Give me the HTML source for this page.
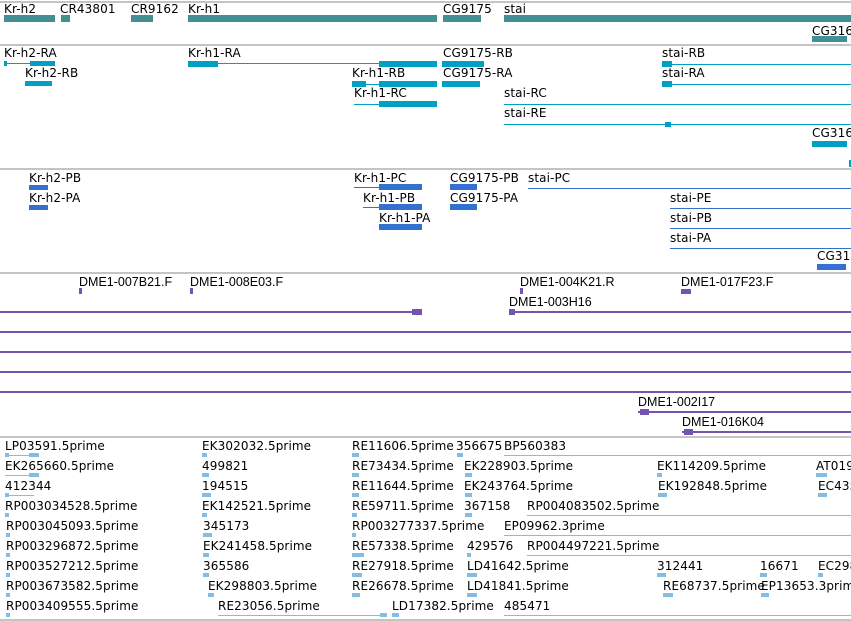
<!DOCTYPE html>
<html><head><meta charset="utf-8"><style>
body{margin:0;width:851px;height:621px;background:#fff;position:relative;overflow:hidden;font-family:"DejaVu Sans","Liberation Sans",sans-serif}
.t{position:absolute;font-size:12px;line-height:13px;letter-spacing:0.1px;white-space:nowrap;color:#000;margin-top:1px}
.d{position:absolute;font-size:12.5px;line-height:12px;white-space:nowrap;font-family:"Liberation Sans",sans-serif;margin-top:0px}
.s{position:absolute;left:0;width:851px;height:2px;background:#c4c4c4}
.g{position:absolute;background:#438f94;height:7px}
.r{position:absolute;background:#00a0c4}
.p{position:absolute;background:#3370d0}
.m{position:absolute;background:#7355b0}
.e{position:absolute;background:#85bde2}
</style></head><body>
<div class="s" style="top:1px"></div>
<div class="s" style="top:44px"></div>
<div class="s" style="top:168px"></div>
<div class="s" style="top:272px"></div>
<div class="s" style="top:436px"></div>
<div class="s" style="top:619px"></div>

<div class="t" style="left:4px;top:2px">Kr-h2</div>
<div class="t" style="left:60px;top:2px">CR43801</div>
<div class="t" style="left:131px;top:2px">CR9162</div>
<div class="t" style="left:188px;top:2px">Kr-h1</div>
<div class="t" style="left:443px;top:2px">CG9175</div>
<div class="t" style="left:504px;top:2px">stai</div>
<div class="g" style="left:4px;top:15px;width:51px"></div>
<div class="g" style="left:61px;top:15px;width:9px"></div>
<div class="g" style="left:131px;top:15px;width:22px"></div>
<div class="g" style="left:188px;top:15px;width:249px"></div>
<div class="g" style="left:443px;top:15px;width:38px"></div>
<div class="g" style="left:504px;top:15px;width:347px"></div>
<div class="t" style="left:812px;top:24px">CG316</div>
<div class="g" style="left:812px;top:36px;width:35px;height:6px"></div>

<div class="t" style="left:4px;top:46px">Kr-h2-RA</div>
<div class="r" style="left:4px;top:63px;width:51px;height:1px"></div>
<div class="r" style="left:30px;top:61px;width:25px;height:5px"></div>
<div class="r" style="left:4px;top:61px;width:3px;height:5px"></div>
<div class="t" style="left:25px;top:66px">Kr-h2-RB</div>
<div class="r" style="left:25px;top:81px;width:27px;height:5px"></div>
<div class="t" style="left:188px;top:46px">Kr-h1-RA</div>
<div class="r" style="left:188px;top:63px;width:249px;height:1px"></div>
<div class="r" style="left:188px;top:61px;width:30px;height:6px"></div>
<div class="r" style="left:379px;top:61px;width:58px;height:6px"></div>
<div class="t" style="left:352px;top:66px">Kr-h1-RB</div>
<div class="r" style="left:352px;top:84px;width:85px;height:1px"></div>
<div class="r" style="left:352px;top:81px;width:14px;height:6px"></div>
<div class="r" style="left:379px;top:81px;width:58px;height:6px"></div>
<div class="t" style="left:354px;top:86px">Kr-h1-RC</div>
<div class="r" style="left:354px;top:104px;width:83px;height:1px"></div>
<div class="r" style="left:379px;top:101px;width:58px;height:6px"></div>
<div class="t" style="left:443px;top:46px">CG9175-RB</div>
<div class="r" style="left:442px;top:61px;width:42px;height:6px"></div>
<div class="t" style="left:443px;top:66px">CG9175-RA</div>
<div class="r" style="left:442px;top:81px;width:38px;height:6px"></div>
<div class="t" style="left:662px;top:46px">stai-RB</div>
<div class="r" style="left:662px;top:64px;width:189px;height:1px"></div>
<div class="r" style="left:662px;top:61px;width:10px;height:6px"></div>
<div class="t" style="left:662px;top:66px">stai-RA</div>
<div class="r" style="left:662px;top:84px;width:189px;height:1px"></div>
<div class="r" style="left:662px;top:81px;width:10px;height:6px"></div>
<div class="t" style="left:504px;top:86px">stai-RC</div>
<div class="r" style="left:504px;top:104px;width:347px;height:1px"></div>
<div class="t" style="left:504px;top:106px">stai-RE</div>
<div class="r" style="left:504px;top:124px;width:347px;height:1px"></div>
<div class="r" style="left:665px;top:122px;width:6px;height:5px"></div>
<div class="t" style="left:812px;top:126px">CG316</div>
<div class="r" style="left:812px;top:141px;width:35px;height:6px"></div>
<div class="r" style="left:849px;top:160px;width:2px;height:7px"></div>

<div class="t" style="left:29px;top:171px">Kr-h2-PB</div>
<div class="p" style="left:29px;top:185px;width:19px;height:5px"></div>
<div class="t" style="left:29px;top:191px">Kr-h2-PA</div>
<div class="p" style="left:29px;top:205px;width:19px;height:5px"></div>
<div class="t" style="left:354px;top:171px">Kr-h1-PC</div>
<div class="p" style="left:354px;top:187px;width:68px;height:1px"></div>
<div class="p" style="left:379px;top:184px;width:43px;height:6px"></div>
<div class="t" style="left:363px;top:191px">Kr-h1-PB</div>
<div class="p" style="left:363px;top:207px;width:59px;height:1px"></div>
<div class="p" style="left:379px;top:204px;width:43px;height:6px"></div>
<div class="t" style="left:379px;top:211px">Kr-h1-PA</div>
<div class="p" style="left:379px;top:224px;width:43px;height:6px"></div>
<div class="t" style="left:450px;top:171px">CG9175-PB</div>
<div class="p" style="left:450px;top:184px;width:27px;height:6px"></div>
<div class="t" style="left:450px;top:191px">CG9175-PA</div>
<div class="p" style="left:450px;top:204px;width:27px;height:6px"></div>
<div class="t" style="left:528px;top:171px">stai-PC</div>
<div class="p" style="left:528px;top:188px;width:323px;height:1px"></div>
<div class="t" style="left:670px;top:191px">stai-PE</div>
<div class="p" style="left:670px;top:208px;width:181px;height:1px"></div>
<div class="t" style="left:670px;top:211px">stai-PB</div>
<div class="p" style="left:670px;top:228px;width:181px;height:1px"></div>
<div class="t" style="left:670px;top:231px">stai-PA</div>
<div class="p" style="left:670px;top:248px;width:181px;height:1px"></div>
<div class="t" style="left:817px;top:249px">CG31</div>
<div class="p" style="left:817px;top:264px;width:29px;height:6px"></div>

<div class="d" style="left:79px;top:276px">DME1-007B21.F</div>
<div class="d" style="left:190px;top:276px">DME1-008E03.F</div>
<div class="d" style="left:520px;top:276px">DME1-004K21.R</div>
<div class="d" style="left:681px;top:276px">DME1-017F23.F</div>
<div class="m" style="left:79px;top:288px;width:3px;height:6px"></div>
<div class="m" style="left:190px;top:288px;width:3px;height:6px"></div>
<div class="m" style="left:520px;top:288px;width:3px;height:6px"></div>
<div class="m" style="left:681px;top:289px;width:10px;height:5px"></div>
<div class="d" style="left:509px;top:296px">DME1-003H16</div>
<div class="m" style="left:0;top:311px;width:422px;height:2px"></div>
<div class="m" style="left:412px;top:309px;width:10px;height:6px"></div>
<div class="m" style="left:509px;top:311px;width:342px;height:2px"></div>
<div class="m" style="left:509px;top:309px;width:6px;height:6px"></div>
<div class="m" style="left:0;top:331px;width:851px;height:2px"></div>
<div class="m" style="left:0;top:351px;width:851px;height:2px"></div>
<div class="m" style="left:0;top:371px;width:851px;height:2px"></div>
<div class="m" style="left:0;top:391px;width:851px;height:2px"></div>
<div class="d" style="left:638px;top:396px">DME1-002I17</div>
<div class="m" style="left:638px;top:411px;width:213px;height:2px"></div>
<div class="m" style="left:640px;top:409px;width:9px;height:6px"></div>
<div class="d" style="left:682px;top:416px">DME1-016K04</div>
<div class="m" style="left:682px;top:431px;width:169px;height:2px"></div>
<div class="m" style="left:684px;top:429px;width:9px;height:6px"></div>

<div class="t" style="left:5px;top:439px">LP03591.5prime</div>
<div class="e" style="left:5px;top:455px;width:34px;height:1px"></div><div class="e" style="left:5px;top:453px;width:4px;height:4px"></div><div class="e" style="left:29px;top:453px;width:10px;height:4px"></div>
<div class="t" style="left:5px;top:459px">EK265660.5prime</div>
<div class="e" style="left:5px;top:475px;width:34px;height:1px"></div><div class="e" style="left:29px;top:473px;width:10px;height:4px"></div>
<div class="t" style="left:5px;top:479px">412344</div>
<div class="e" style="left:5px;top:495px;width:29px;height:1px"></div><div class="e" style="left:5px;top:493px;width:4px;height:4px"></div>
<div class="t" style="left:5px;top:499px">RP003034528.5prime</div><div class="e" style="left:5px;top:513px;width:4px;height:4px"></div>
<div class="t" style="left:6px;top:519px">RP003045093.5prime</div><div class="e" style="left:6px;top:533px;width:4px;height:4px"></div>
<div class="t" style="left:6px;top:539px">RP003296872.5prime</div><div class="e" style="left:6px;top:553px;width:4px;height:4px"></div>
<div class="t" style="left:6px;top:559px">RP003527212.5prime</div><div class="e" style="left:6px;top:573px;width:4px;height:4px"></div>
<div class="t" style="left:6px;top:579px">RP003673582.5prime</div><div class="e" style="left:6px;top:593px;width:4px;height:4px"></div>
<div class="t" style="left:6px;top:599px">RP003409555.5prime</div><div class="e" style="left:6px;top:613px;width:4px;height:4px"></div>
<div class="t" style="left:202px;top:439px">EK302032.5prime</div><div class="e" style="left:202px;top:453px;width:5px;height:4px"></div>
<div class="t" style="left:202px;top:459px">499821</div><div class="e" style="left:202px;top:473px;width:7px;height:4px"></div>
<div class="t" style="left:202px;top:479px">194515</div><div class="e" style="left:202px;top:493px;width:9px;height:4px"></div>
<div class="t" style="left:202px;top:499px">EK142521.5prime</div><div class="e" style="left:202px;top:513px;width:5px;height:4px"></div>
<div class="t" style="left:203px;top:519px">345173</div><div class="e" style="left:203px;top:533px;width:9px;height:4px"></div>
<div class="t" style="left:203px;top:539px">EK241458.5prime</div><div class="e" style="left:203px;top:553px;width:6px;height:4px"></div>
<div class="t" style="left:203px;top:559px">365586</div><div class="e" style="left:203px;top:573px;width:6px;height:4px"></div>
<div class="t" style="left:208px;top:579px">EK298803.5prime</div><div class="e" style="left:208px;top:593px;width:6px;height:4px"></div>
<div class="t" style="left:218px;top:599px">RE23056.5prime</div><div class="e" style="left:218px;top:615px;width:169px;height:1px"></div><div class="e" style="left:380px;top:613px;width:7px;height:4px"></div>
<div class="t" style="left:352px;top:439px">RE11606.5prime</div><div class="e" style="left:352px;top:453px;width:7px;height:4px"></div>
<div class="t" style="left:352px;top:459px">RE73434.5prime</div><div class="e" style="left:352px;top:473px;width:7px;height:4px"></div>
<div class="t" style="left:352px;top:479px">RE11644.5prime</div><div class="e" style="left:352px;top:493px;width:7px;height:4px"></div>
<div class="t" style="left:352px;top:499px">RE59711.5prime</div><div class="e" style="left:352px;top:513px;width:5px;height:4px"></div>
<div class="t" style="left:352px;top:519px">RP003277337.5prime</div><div class="e" style="left:352px;top:533px;width:4px;height:4px"></div>
<div class="t" style="left:352px;top:539px">RE57338.5prime</div><div class="e" style="left:352px;top:553px;width:12px;height:4px"></div>
<div class="t" style="left:352px;top:559px">RE27918.5prime</div><div class="e" style="left:352px;top:573px;width:10px;height:4px"></div>
<div class="t" style="left:352px;top:579px">RE26678.5prime</div><div class="e" style="left:352px;top:593px;width:8px;height:4px"></div>
<div class="t" style="left:392px;top:599px">LD17382.5prime</div><div class="e" style="left:392px;top:613px;width:7px;height:4px"></div>
<div class="t" style="left:456px;top:439px">356675</div><div class="e" style="left:457px;top:453px;width:6px;height:4px"></div>
<div class="t" style="left:504px;top:439px">BP560383</div><div class="e" style="left:504px;top:455px;width:347px;height:1px"></div>
<div class="t" style="left:464px;top:459px">EK228903.5prime</div><div class="e" style="left:465px;top:473px;width:7px;height:4px"></div>
<div class="t" style="left:464px;top:479px">EK243764.5prime</div><div class="e" style="left:465px;top:493px;width:7px;height:4px"></div>
<div class="t" style="left:464px;top:499px">367158</div><div class="e" style="left:465px;top:513px;width:7px;height:4px"></div>
<div class="t" style="left:527px;top:499px">RP004083502.5prime</div><div class="e" style="left:527px;top:515px;width:324px;height:1px"></div>
<div class="t" style="left:504px;top:519px">EP09962.3prime</div><div class="e" style="left:504px;top:535px;width:347px;height:1px"></div>
<div class="t" style="left:467px;top:539px">429576</div><div class="e" style="left:467px;top:553px;width:4px;height:4px"></div>
<div class="t" style="left:527px;top:539px">RP004497221.5prime</div><div class="e" style="left:527px;top:555px;width:324px;height:1px"></div>
<div class="t" style="left:467px;top:559px">LD41642.5prime</div><div class="e" style="left:467px;top:573px;width:10px;height:4px"></div>
<div class="t" style="left:467px;top:579px">LD41841.5prime</div><div class="e" style="left:467px;top:593px;width:10px;height:4px"></div>
<div class="t" style="left:504px;top:599px">485471</div><div class="e" style="left:504px;top:615px;width:347px;height:1px"></div>
<div class="t" style="left:657px;top:459px">EK114209.5prime</div><div class="e" style="left:657px;top:473px;width:5px;height:4px"></div>
<div class="t" style="left:658px;top:479px">EK192848.5prime</div><div class="e" style="left:658px;top:493px;width:9px;height:4px"></div>
<div class="t" style="left:657px;top:559px">312441</div><div class="e" style="left:657px;top:573px;width:9px;height:4px"></div>
<div class="t" style="left:663px;top:579px">RE68737.5prime</div><div class="e" style="left:663px;top:593px;width:10px;height:4px"></div>
<div class="t" style="left:760px;top:559px">16671</div><div class="e" style="left:760px;top:573px;width:7px;height:4px"></div>
<div class="t" style="left:761px;top:579px">EP13653.3prime</div><div class="e" style="left:761px;top:593px;width:8px;height:4px"></div>
<div class="t" style="left:816px;top:459px">AT019</div><div class="e" style="left:816px;top:473px;width:11px;height:4px"></div>
<div class="t" style="left:818px;top:479px">EC435</div><div class="e" style="left:818px;top:493px;width:9px;height:4px"></div>
<div class="t" style="left:818px;top:559px">EC298</div><div class="e" style="left:818px;top:573px;width:5px;height:4px"></div>
</body></html>
